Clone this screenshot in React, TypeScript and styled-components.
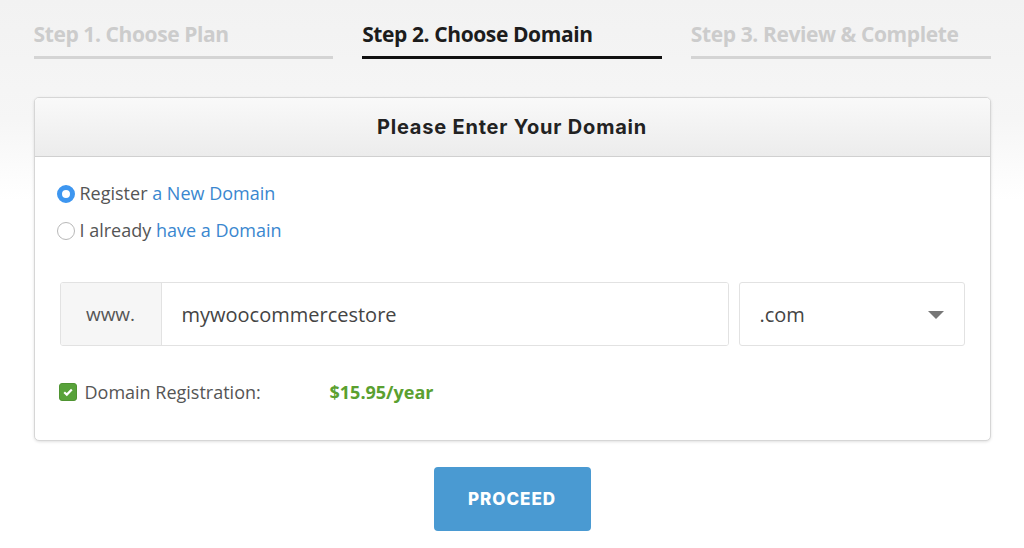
import React, { useState } from 'react';
import styled, { createGlobalStyle } from 'styled-components';

const GlobalStyle = createGlobalStyle`
  html, body {
    margin: 0;
    padding: 0;
    background: #fff;
  }
  body {
    font-family: 'Open Sans', 'Liberation Sans', sans-serif;
  }
`;

const steps = ['Step 1. Choose Plan', 'Step 2. Choose Domain', 'Step 3. Review & Complete'];

const App: React.FC = () => {
  const [mode, setMode] = useState<'new' | 'own'>('new');
  const [domain, setDomain] = useState('mywoocommercestore');
  const [registration, setRegistration] = useState(true);

  return (
    <Page>
      <GlobalStyle />
      <Inner>
        <Steps>
          {steps.map((label, i) => (
            <Step key={label} active={i === 1}>
              {label}
            </Step>
          ))}
        </Steps>
        <Card>
          <CardHeader>Please Enter Your Domain</CardHeader>
          <CardBody>
            <RadioList>
              <RadioRow onClick={() => setMode('new')}>
                <Radio checked={mode === 'new'} />
                <span>
                  Register <Link>a New Domain</Link>
                </span>
              </RadioRow>
              <RadioRow onClick={() => setMode('own')}>
                <Radio checked={mode === 'own'} />
                <span>
                  I already <Link>have a Domain</Link>
                </span>
              </RadioRow>
            </RadioList>
            <DomainRow>
              <InputGroup>
                <Addon>www.</Addon>
                <DomainInput value={domain} onChange={(e) => setDomain(e.target.value)} />
              </InputGroup>
              <Select>
                <span>.com</span>
                <Caret />
              </Select>
            </DomainRow>
            <CheckRow onClick={() => setRegistration(!registration)}>
              <Check checked={registration}>
                {registration && (
                  <svg width="12" height="12" viewBox="0 0 12 12">
                    <path d="M2.2 6.2 L4.8 8.6 L9.8 3.4" fill="none" stroke="#fff" strokeWidth="2.2" />
                  </svg>
                )}
              </Check>
              <CheckLabel>Domain Registration:</CheckLabel>
              <Price>$15.95/year</Price>
            </CheckRow>
          </CardBody>
        </Card>
        <Actions>
          <ProceedButton>PROCEED</ProceedButton>
        </Actions>
      </Inner>
    </Page>
  );
};

export default App;

const Page = styled.div`
  min-height: 548px;
  background: linear-gradient(to bottom, #f2f2f2 0px, #f6f6f6 120px, #ffffff 200px);
`;

const Inner = styled.div`
  width: 957px;
  margin: 0 auto;
  padding-top: 20px;
`;

const Steps = styled.div`
  display: flex;
  gap: 29px;
`;

const Step = styled.div<{ active?: boolean }>`
  flex: 1;
  font-family: 'Open Sans', sans-serif;
  font-weight: 700;
  font-size: 21px;
  letter-spacing: -0.4px;
  line-height: 28px;
  color: ${(p) => (p.active ? '#1c1c1c' : '#cccccc')};
  padding-bottom: 8px;
  border-bottom: 3px solid ${(p) => (p.active ? '#111' : '#d4d4d4')};
`;

const Card = styled.div`
  margin-top: 38px;
  background: #fff;
  border: 1px solid #d6d6d6;
  border-radius: 5px;
  box-shadow: 0 1px 3px rgba(0, 0, 0, 0.12);
  overflow: hidden;
`;

const CardHeader = styled.div`
  height: 58px;
  display: flex;
  align-items: center;
  justify-content: center;
  background: linear-gradient(to bottom, #f9f9f9, #ececec);
  border-bottom: 1px solid #d0d0d0;
  font-family: Inter, 'Noto Sans', sans-serif;
  font-weight: 700;
  font-size: 20px;
  letter-spacing: 0.8px;
  color: #222;
`;

const CardBody = styled.div`
  padding: 24px 25px 36px 22px;
`;

const RadioList = styled.div`
  display: flex;
  flex-direction: column;
  gap: 12px;
`;

const RadioRow = styled.label`
  display: flex;
  align-items: center;
  gap: 5px;
  font-size: 18px;
  line-height: 25px;
  color: #555;
  cursor: pointer;
`;

const Radio = styled.span<{ checked: boolean }>`
  width: 18px;
  height: 18px;
  box-sizing: border-box;
  border-radius: 50%;
  border: ${(p) => (p.checked ? '5.5px solid #3d96f0' : '1px solid #b8b8b8')};
  background: #fff;
`;

const Link = styled.span`
  color: #3a87cf;
`;

const DomainRow = styled.div`
  display: flex;
  gap: 10px;
  margin-top: 39px;
  margin-left: 3px;
`;

const InputGroup = styled.div`
  display: flex;
  width: 669px;
  height: 64px;
  box-sizing: border-box;
  border: 1px solid #e2e2e2;
  border-radius: 3px;
  overflow: hidden;
`;

const Addon = styled.div`
  width: 100px;
  display: flex;
  align-items: center;
  justify-content: center;
  background: #f6f6f6;
  border-right: 1px solid #e2e2e2;
  font-size: 19px;
  color: #555;
`;

const DomainInput = styled.input`
  flex: 1;
  border: none;
  outline: none;
  padding: 0 20px;
  font-family: 'Open Sans', sans-serif;
  font-size: 20px;
  color: #444;
  caret-color: #222;
  background: #fff;
`;

const Select = styled.div`
  flex: 1;
  height: 64px;
  box-sizing: border-box;
  border: 1px solid #e2e2e2;
  border-radius: 3px;
  display: flex;
  align-items: center;
  justify-content: space-between;
  padding: 0 20px 0 20px;
  font-size: 20px;
  color: #444;
`;

const Caret = styled.span`
  width: 0;
  height: 0;
  border-left: 8px solid transparent;
  border-right: 8px solid transparent;
  border-top: 8px solid #777;
  margin-top: 2px;
`;

const CheckRow = styled.label`
  display: flex;
  align-items: center;
  margin-top: 34px;
  margin-left: 2px;
  font-size: 18px;
  line-height: 24px;
  color: #555;
  cursor: pointer;
`;

const Check = styled.span<{ checked: boolean }>`
  width: 18px;
  height: 18px;
  border-radius: 3px;
  box-sizing: border-box;
  background: ${(p) => (p.checked ? '#58a23a' : '#fff')};
  border: 1px solid ${(p) => (p.checked ? '#4f9432' : '#b8b8b8')};
  display: flex;
  align-items: center;
  justify-content: center;
`;

const CheckLabel = styled.span`
  margin-left: 8px;
  width: 245px;
`;

const Price = styled.span`
  color: #5aa030;
  font-weight: 700;
`;

const Actions = styled.div`
  display: flex;
  justify-content: center;
  margin-top: 26px;
`;

const ProceedButton = styled.button`
  width: 157px;
  height: 64px;
  border: none;
  border-radius: 4px;
  background: #4a9ad2;
  color: #fff;
  font-family: Inter, 'Noto Sans', sans-serif;
  font-weight: 800;
  font-size: 17px;
  letter-spacing: 1px;
  cursor: pointer;
`;
